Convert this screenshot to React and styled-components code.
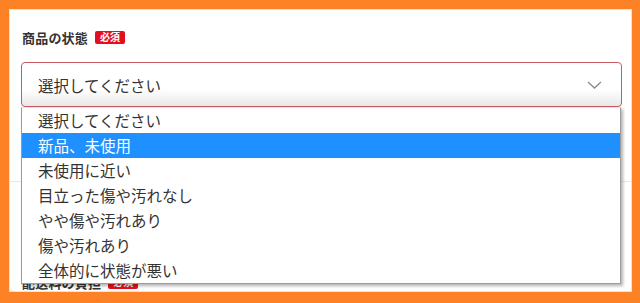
import React from "react";
import styled, { createGlobalStyle } from "styled-components";

const Global = createGlobalStyle`
  html, body { margin: 0; padding: 0; background: #fd8226; }
  * { box-sizing: border-box; }
  body { font-family: "Noto Sans CJK JP", "Noto Sans", sans-serif; }
`;

const Page = styled.div`
  width: 640px;
  height: 303px;
  padding: 9px 8px 11px 9px;
  display: flex;
  background: #fd8226;
`;

const Card = styled.div`
  flex: 1;
  background: #fff;
  border: 1px solid #e4e4e4;
  overflow: hidden;
  display: flex;
  flex-direction: column;
`;

const Section = styled.div`
  padding: ${(p) => p.$pad};
  display: flex;
  flex-direction: column;
`;

const Divider = styled.div`
  height: 1px;
  background: #e8e8e8;
`;

const LabelRow = styled.div`
  height: 16px;
  padding-left: 1px;
  display: flex;
  align-items: center;
  gap: 7px;
  margin-bottom: ${(p) => p.$mb || 0}px;
`;

const Label = styled.span`
  font-size: 13px;
  font-weight: 700;
  color: #333;
  letter-spacing: 0.2px;
`;

const Badge = styled.span`
  display: inline-flex;
  align-items: center;
  height: 13px;
  padding: 0 5px;
  background: #e2101c;
  color: #fff;
  font-size: 10px;
  font-weight: 700;
  border-radius: 2px;
  line-height: 1;
`;

const SelectWrap = styled.div`
  position: relative;
`;

const SelectBox = styled.div`
  height: 45px;
  border: 1px solid #c95a63;
  border-radius: 4px;
  background: linear-gradient(#fff 0%, #fff 62%, #e8e8e8 100%);
  display: flex;
  align-items: center;
  justify-content: space-between;
  padding: 0 19px 0 16px;
  font-size: 15.5px;
  color: #333;
`;

const Chevron = () => (
  <svg width="15" height="8" viewBox="0 0 15 8" fill="none">
    <path d="M1 1 L7.5 7 L14 1" stroke="#8a8a8a" strokeWidth="1.3" />
  </svg>
);

const Dropdown = styled.ul`
  position: absolute;
  top: 100%;
  left: 0;
  right: 1px;
  margin: 0;
  padding: 0;
  list-style: none;
  background: #fff;
  border: 1px solid #9c9c9c;
  border-top-color: #e6e6e6;
  box-shadow: 2px 2px 3px rgba(0, 0, 0, 0.3);
  z-index: 10;
`;

const Option = styled.li`
  height: 25px;
  line-height: 25px;
  padding-left: 16px;
  font-size: 15.5px;
  color: ${(p) => (p.$active ? "#fff" : "#333")};
  background: ${(p) => (p.$active ? "#1e90ff" : "transparent")};
  white-space: nowrap;
`;

const options = [
  "選択してください",
  "新品、未使用",
  "未使用に近い",
  "目立った傷や汚れなし",
  "やや傷や汚れあり",
  "傷や汚れあり",
  "全体的に状態が悪い",
];

export default function App() {
  return (
    <>
      <Global />
      <Page>
        <Card>
          <Section $pad="19px 9px 74px 11px">
            <LabelRow $mb={17}>
              <Label>商品の状態</Label>
              <Badge>必須</Badge>
            </LabelRow>
            <SelectWrap>
              <SelectBox>
                <span>選択してください</span>
                <Chevron />
              </SelectBox>
              <Dropdown>
                {options.map((o, i) => (
                  <Option key={o} $active={i === 1}>
                    {o}
                  </Option>
                ))}
              </Dropdown>
            </SelectWrap>
          </Section>
          <Divider />
          <Section $pad="92px 9px 0 11px">
            <LabelRow>
              <Label>配送料の負担</Label>
              <Badge>必須</Badge>
            </LabelRow>
          </Section>
        </Card>
      </Page>
    </>
  );
}
